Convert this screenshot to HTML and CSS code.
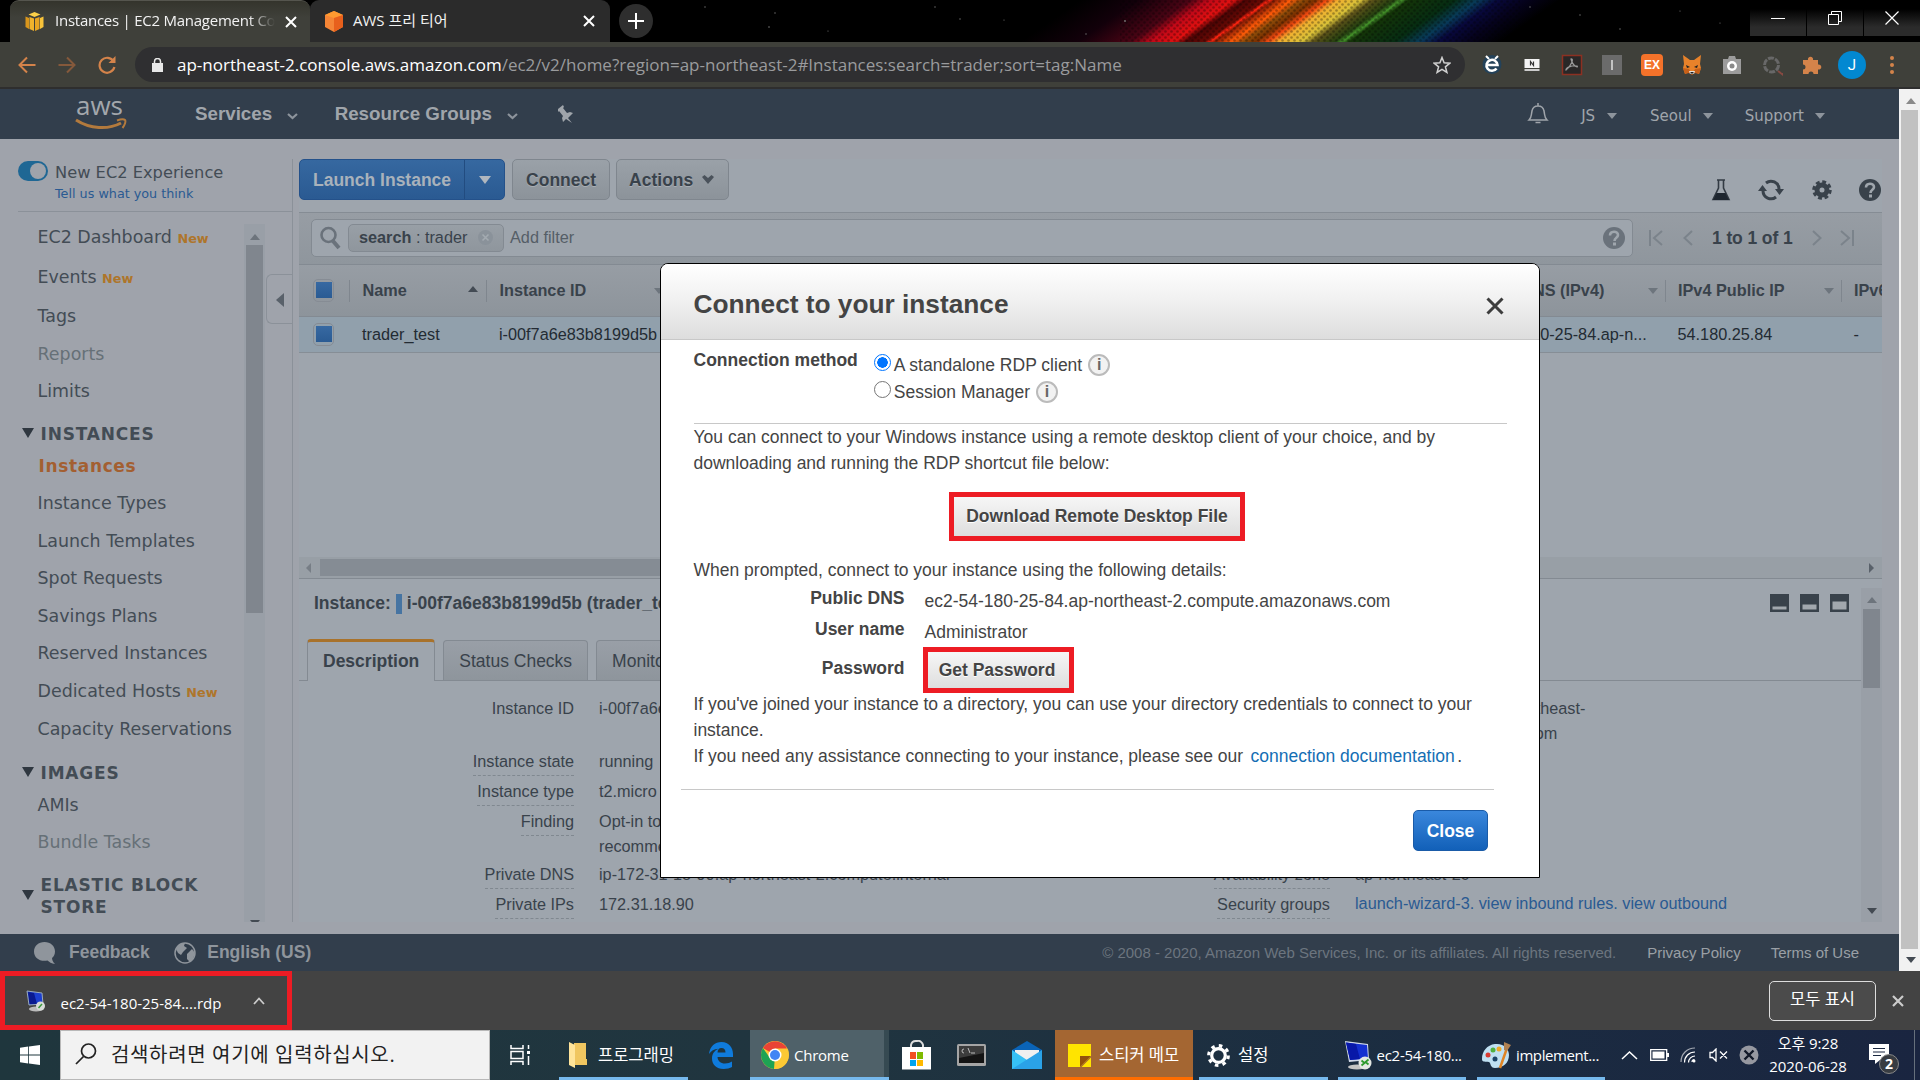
FILE: index.html
```html
<!DOCTYPE html>
<html lang="ko">
<head>
<meta charset="utf-8">
<title>Instances | EC2 Management Console</title>
<link rel="stylesheet" href="styles.css">
</head>
<body>
<div class="screen">

<!-- Browser tab strip -->
<div class="tabstrip">
  <svg class="wallpaper" width="1920" height="42" viewBox="0 0 1920 42">
    <defs>
      <linearGradient id="spectrum" x1="1080" x2="1560" y1="0" y2="0" gradientUnits="userSpaceOnUse">
        <stop offset="0" stop-color="#000"/><stop offset=".12" stop-color="#12000a"/><stop offset=".23" stop-color="#4a0414"/>
        <stop offset=".27" stop-color="#c00818"/><stop offset=".32" stop-color="#e01010"/><stop offset=".345" stop-color="#4a0404"/>
        <stop offset=".385" stop-color="#6a0a04"/><stop offset=".395" stop-color="#ff2410"/><stop offset=".405" stop-color="#8a1c04"/>
        <stop offset=".44" stop-color="#ff5a08"/><stop offset=".465" stop-color="#8a4a08"/><stop offset=".49" stop-color="#7a3000"/>
        <stop offset=".515" stop-color="#f04810"/><stop offset=".54" stop-color="#f0b030"/><stop offset=".585" stop-color="#d8c038"/>
        <stop offset=".61" stop-color="#5a5018"/><stop offset=".655" stop-color="#244010"/><stop offset=".67" stop-color="#44922a"/>
        <stop offset=".685" stop-color="#143408"/><stop offset=".78" stop-color="#062c12"/><stop offset=".83" stop-color="#083a58"/>
        <stop offset=".87" stop-color="#08083c"/><stop offset=".93" stop-color="#05021c"/><stop offset="1" stop-color="#000"/>
      </linearGradient>
      <pattern id="mesh" width="6" height="6" patternUnits="userSpaceOnUse"><circle cx="1.5" cy="1.5" r="1.3" fill="#000" opacity=".3"/><circle cx="4.5" cy="4.5" r="1.3" fill="#000" opacity=".3"/></pattern>
    </defs>
    <rect width="1920" height="42" fill="#000"/>
    <rect x="1080" width="480" height="42" fill="url(#spectrum)" transform="skewX(-55)"/>
    <rect x="1120" width="400" height="42" fill="url(#mesh)"/>
    <g fill="#777"><circle cx="705" cy="7" r=".7"/><circle cx="775" cy="13" r=".7"/><circle cx="769" cy="27" r=".8"/><circle cx="828" cy="31" r=".6"/><circle cx="935" cy="7" r=".7"/><circle cx="960" cy="19" r=".7"/><circle cx="1004" cy="20" r=".6"/><circle cx="1086" cy="34" r=".7"/><circle cx="1125" cy="21" r=".9"/><circle cx="1530" cy="7" r=".7"/><circle cx="1580" cy="15" r=".7"/><circle cx="1620" cy="29" r=".7"/><circle cx="1680" cy="11" r=".6"/><circle cx="1720" cy="23" r=".6"/><circle cx="1765" cy="5" r=".7"/></g>
  </svg>
  <div class="tabs">
    <div class="tab tab-active">
      <svg width="19" height="19" viewBox="0 0 19 19"><path d="M.5 4.500L4 6v11l-3.500-2z" fill="#d9961c"/><path d="M4.500 5L9 6.500V19l-4.500-2z" fill="#f0b22c"/><path d="M14.500 5L10 6.500V19l4.500-2z" fill="#e8a422"/><path d="M18.500 4.500L15 6v11l3.500-2z" fill="#f8c33a"/><path d="M9.500 0l6 2.500-6 2.500-6-2.500z" fill="#fbd048"/></svg>
      <span class="tab-title fade">Instances | EC2 Management Co</span>
      <svg class="tab-x" width="12" height="12" viewBox="0 0 12 12"><path d="M1 1l10 10M11 1L1 11" stroke="#fff" stroke-width="2"/></svg>
    </div>
    <div class="tab">
      <svg width="20" height="21" viewBox="0 0 20 21"><path d="M10 0l9 4v12l-9 5-9-5V4z" fill="#f58536"/><path d="M1 4l9 3 9-3-9-4z" fill="#ff9a30"/><path d="M10 7l9-3v12l-9 5z" fill="#e8601c"/></svg>
      <span class="tab-title">AWS 프리 티어</span>
      <svg class="tab-x" width="12" height="12" viewBox="0 0 12 12"><path d="M1 1l10 10M11 1L1 11" stroke="#fff" stroke-width="2"/></svg>
    </div>
    <div class="newtab"><svg width="16" height="16" viewBox="0 0 16 16"><path d="M8 0v16M0 8h16" stroke="#fff" stroke-width="2"/></svg></div>
  </div>
  <div class="winbtns">
    <div class="winbtn"><svg width="14" height="14" viewBox="0 0 14 14"><path d="M0 7.500h14" stroke="#fff"/></svg></div>
    <div class="winbtn"><svg width="14" height="14" viewBox="0 0 14 14" fill="none" stroke="#fff"><path d="M.5 3.500h10v10H.5zM3.500 3V.5h10v10H11"/></svg></div>
    <div class="winbtn"><svg width="14" height="14" viewBox="0 0 14 14"><path d="M.5 .5l13 13M13.500.5l-13 13" stroke="#fff" stroke-width="1.200"/></svg></div>
  </div>
</div>

<!-- Browser toolbar -->
<div class="toolbar">
  <div class="navbtns">
    <svg width="18" height="18" viewBox="0 0 18 18" fill="none" stroke="#d4834a" stroke-width="2"><path d="M17.500 9H2M9 1.500L1.500 9 9 16.500"/></svg>
    <svg width="18" height="18" viewBox="0 0 18 18" fill="none" stroke="#85593b" stroke-width="2"><path d="M.5 9H16M9 1.500L16.500 9 9 16.500"/></svg>
    <svg width="18" height="18" viewBox="0 0 18 18" fill="none" stroke="#d4834a" stroke-width="2.200"><path d="M15.600 5.500A7.500 7.500 0 1 0 16.400 11"/><path d="M17.500 0v7h-7z" fill="#d4834a" stroke="none"/></svg>
  </div>
  <div class="omnibox">
    <svg width="11" height="14" viewBox="0 0 11 14"><path d="M0 5h11v9H0z" fill="#e8e8e8"/><path d="M2.500 6V3.500a3 3 0 0 1 6 0V6" fill="none" stroke="#e8e8e8" stroke-width="1.500"/></svg>
    <span class="url"><b>ap-northeast-2.console.aws.amazon.com</b>/ec2/v2/home?region=ap-northeast-2#Instances:search=trader;sort=tag:Name</span>
    <svg class="star" width="18" height="18" viewBox="0 0 18 18"><path d="M9 1.500l2.100 5.300 5.700.4-4.400 3.600 1.500 5.600L9 13.300l-4.900 3.100 1.500-5.600L1.200 7.200l5.700-.4z" fill="none" stroke="#d0d0d0" stroke-width="1.500"/></svg>
  </div>
  <div class="exts">
    <svg width="22" height="22" viewBox="0 0 22 22"><circle cx="11" cy="10.500" r="9.500" fill="#24425a"/><path d="M5 2l3 3M17 2l-3 3" stroke="#fff" stroke-width="2"/><path d="M15.500 14.500A5.500 5.500 0 1 1 16.500 11H6.500" fill="none" stroke="#fff" stroke-width="2.600"/></svg>
    <svg width="22" height="22" viewBox="0 0 22 22"><path d="M3.500 5h15v9h-15z" fill="#f4f4f4"/><path d="M3.500 15h15v2h-15z" fill="#ccc"/><path d="M9.500 11.500v-4l3 4v-4" fill="none" stroke="#333" stroke-width="1.200"/></svg>
    <svg width="22" height="22" viewBox="0 0 22 22"><rect x="1.500" y="1.500" width="19" height="19" fill="#292727" stroke="#8c3022" stroke-width="1.500"/><path d="M10 5c3-1 1 6-5 11-1-2 6-5 11-4 2 2-4 1-6-7z" fill="none" stroke="#999" stroke-width="1.200"/></svg>
    <svg width="22" height="22" viewBox="0 0 22 22"><rect x="1" y="1" width="20" height="20" fill="#6b6b6b"/><path d="M11 6v10" stroke="#e0e0e0" stroke-width="1.500"/></svg>
    <div class="ext-ex">EX</div>
    <svg width="22" height="22" viewBox="0 0 22 22"><path d="M2 1l7 5h4l7-5-1 9 1 4-2 6-4-2-3 2-3-2-4 2-2-6 1-4z" fill="#e8822a"/><path d="M2 14l6 1 3 5 3-5 6-1-2 6-4-1-3 2-3-2-4 1z" fill="#c86018"/><path d="M8 17h6l-1 3H9z" fill="#e8e0d8"/><path d="M5 11l4 2-3 1zM17 11l-4 2 3 1zM9.500 18h3v1.500h-3z" fill="#222"/></svg>
    <svg width="22" height="22" viewBox="0 0 22 22"><path d="M2 5h5l1-3h6l1 3h5v15H2z" fill="#9c9c9c"/><circle cx="11" cy="12" r="5" fill="#fff"/><circle cx="11" cy="12" r="2.500" fill="#8a8a8a"/></svg>
    <svg width="22" height="22" viewBox="0 0 22 22"><circle cx="10.500" cy="11" r="7" fill="none" stroke="#686868" stroke-width="3" stroke-dasharray="6 1.300"/><path d="M17 17l4 3v-1" stroke="#864a42" stroke-width="2"/></svg>
    <svg width="22" height="22" viewBox="0 0 22 22"><path d="M2 6h5a2.600 2.600 0 1 1 5 0h5v4.500a2.600 2.600 0 1 1 0 5V20h-4.500a2.500 2.500 0 1 0-5 0H2v-4.500a2.500 2.500 0 1 0 0-5z" fill="#d4834a"/></svg>
    <div class="avatar">J</div>
    <svg width="22" height="22" viewBox="0 0 22 22" fill="#d4834a"><circle cx="11" cy="4" r="2"/><circle cx="11" cy="11" r="2"/><circle cx="11" cy="18" r="2"/></svg>
  </div>
</div>

<!-- Web page -->
<div class="viewport">
 <div class="page">
  <header class="aws-header">
    <div class="aws-logo"><span>aws</span><svg width="52" height="14" viewBox="0 0 52 14"><path d="M1 2c14 9 32 10 45 3" fill="none" stroke="#b37a3d" stroke-width="3"/><path d="M42 2.500c4-1.500 7-1.500 8-.5s0 5-2.500 8" fill="none" stroke="#b37a3d" stroke-width="2"/></svg></div>
    <span class="hmenu services">Services <svg width="11" height="7" viewBox="0 0 11 7"><path d="M1 1l4.500 4L10 1" fill="none" stroke="#8d949c" stroke-width="2.200"/></svg></span>
    <span class="hmenu">Resource Groups <svg width="11" height="7" viewBox="0 0 11 7"><path d="M1 1l4.500 4L10 1" fill="none" stroke="#8d949c" stroke-width="2.200"/></svg></span>
    <svg class="pin" width="17" height="18" viewBox="0 0 17 18"><path d="M1 4l5-4 1 2-1 1 4 5 3-1 3 1-5 5 4 5-6-4-3 3-1-4 1-2-4-5-1 1z" fill="#a0a5ab"/></svg>
    <div class="hright">
      <svg class="bell" width="22" height="22" viewBox="0 0 22 22" fill="none" stroke="#a0a5ab" stroke-width="1.500"><path d="M2 17c3-3 2-5 3-9 .5-3 2.500-5 6-5s5.500 2 6 5c1 4 0 6 3 9zM11 3V0M8.500 19.500h5"/></svg>
      <span class="user">JS <i class="caret"></i></span><span>Seoul <i class="caret"></i></span><span>Support <i class="caret"></i></span>
    </div>
  </header>

  <div class="content">
    <aside class="sidebar">
      <div class="experience">
        <div class="toggle"><i></i></div>
        <div><div class="exp-title">New EC2 Experience</div><div class="exp-link">Tell us what you think</div></div>
      </div>
      <div class="nav-area">
        <nav>
          <div class="item first">EC2 Dashboard <em>New</em></div>
          <div class="item loose">Events <em>New</em></div>
          <div class="item loose">Tags</div>
          <div class="item muted">Reports</div>
          <div class="item">Limits</div>
          <div class="group">INSTANCES</div>
          <div class="item current">Instances</div>
          <div class="item">Instance Types</div>
          <div class="item">Launch Templates</div>
          <div class="item">Spot Requests</div>
          <div class="item">Savings Plans</div>
          <div class="item">Reserved Instances</div>
          <div class="item">Dedicated Hosts <em>New</em></div>
          <div class="item after-new">Capacity Reservations</div>
          <div class="group">IMAGES</div>
          <div class="item tight">AMIs</div>
          <div class="item muted">Bundle Tasks</div>
          <div class="group">ELASTIC BLOCK<br>STORE</div>
        </nav>
        <div class="vscroll nav-scroll"><i class="up"></i><div class="thumb"></div><i class="down"></i></div>
        <div class="collapse"></div>
      </div>
    </aside>

    <main class="panel">
      <div class="actions">
        <div class="btn-primary split"><span>Launch Instance</span><b></b></div>
        <div class="btn">Connect</div>
        <div class="btn">Actions <svg width="12" height="9" viewBox="0 0 12 9"><path d="M0 2l2.500-2L6 3l3.500-3L12 2 6 9z" fill="#4a525b"/></svg></div>
        <div class="tools">
          <svg width="20" height="22" viewBox="0 0 20 22"><path d="M6 1h8M7.500 1v8L2 20.500h16L12.500 9V1" fill="none" stroke="#333b44" stroke-width="1.600"/><path d="M5.500 14h9l3.500 7H2z" fill="#1e262f"/></svg>
          <svg width="26" height="22" viewBox="0 0 26 22" fill="none" stroke="#39424b" stroke-width="3"><path d="M8 4a8 8 0 0 1 13 6M18 18a8 8 0 0 1-13-6"/><path d="M17 10h9l-4.500 6zM9 12H0l4.500-6z" fill="#39424b" stroke="none"/></svg>
          <svg width="20" height="20" viewBox="0 0 20 20"><circle cx="10" cy="10" r="5" fill="none" stroke="#39424b" stroke-width="5"/><circle cx="10" cy="10" r="8" fill="none" stroke="#39424b" stroke-width="3.500" stroke-dasharray="3.700 2.583"/></svg>
          <svg width="22" height="22" viewBox="0 0 22 22"><circle cx="11" cy="11" r="11" fill="#39424b"/><path d="M7 8.500c0-5 8-5 8-.5 0 3-3.500 2.500-3.500 6" fill="none" stroke="#9fa6ad" stroke-width="2.600"/><rect x="10" y="15.500" width="3" height="3" fill="#9fa6ad"/></svg>
        </div>
      </div>

      <div class="filter">
        <div class="filter-box">
          <svg width="22" height="24" viewBox="0 0 22 24"><circle cx="8.500" cy="9" r="7" fill="none" stroke="#6a727b" stroke-width="2.600"/><path d="M13 15l6 7" stroke="#6a727b" stroke-width="4"/></svg>
          <span class="token"><b>search</b> : trader <svg width="15" height="15" viewBox="0 0 15 15"><circle cx="7.500" cy="7.500" r="7.500" fill="#8a929a"/><path d="M4.500 4.500l6 6M10.500 4.500l-6 6" stroke="#a3aab0" stroke-width="1.600"/></svg></span>
          <span class="placeholder">Add filter</span>
          <svg class="help" width="22" height="22" viewBox="0 0 22 22"><circle cx="11" cy="11" r="11" fill="#6a727b"/><path d="M7 8.500c0-5 8-5 8-.5 0 3-3.500 2.500-3.500 6" fill="none" stroke="#9fa6ad" stroke-width="2.600"/><rect x="10" y="15.500" width="3" height="3" fill="#9fa6ad"/></svg>
        </div>
        <div class="pager">
          <svg width="14" height="16" viewBox="0 0 14 16" fill="none" stroke="#7b838b" stroke-width="2"><path d="M1 0v16M13 1L5 8l8 7"/></svg>
          <svg width="10" height="16" viewBox="0 0 10 16" fill="none" stroke="#7b838b" stroke-width="2"><path d="M9 1L1.500 8 9 15"/></svg>
          <b>1 to 1 of 1</b>
          <svg width="10" height="16" viewBox="0 0 10 16" fill="none" stroke="#7b838b" stroke-width="2"><path d="M1 1l7.500 7L1 15"/></svg>
          <svg width="14" height="16" viewBox="0 0 14 16" fill="none" stroke="#7b838b" stroke-width="2"><path d="M13 0v16M1 1l8 7-8 7"/></svg>
        </div>
      </div>

      <div class="table">
        <div class="tr th">
          <div class="td"><i class="check"></i></div>
          <div class="td">Name<i class="sort asc"></i></div>
          <div class="td">Instance ID<i class="sort"></i></div>
          <div class="td plain"></div>
          <div class="td plain dns">Public DNS (IPv4)<i class="sort"></i></div>
          <div class="td">IPv4 Public IP<i class="sort"></i></div>
          <div class="td">IPv6</div>
        </div>
        <div class="tr row">
          <div class="td"><i class="check"></i></div>
          <div class="td">trader_test</div>
          <div class="td">i-00f7a6e83b8199d5b</div>
          <div class="td"></div>
          <div class="td dns">ec2-54-180-25-84.ap-n...</div>
          <div class="td">54.180.25.84</div>
          <div class="td">-</div>
        </div>
      </div>
      <div class="hscroll"><i class="left"></i><div class="hthumb"></div><i class="right"></i></div>

      <div class="details">
        <div class="details-main">
          <div class="details-title"><b>Instance:</b><i></i><b>i-00f7a6e83b8199d5b (trader_test)</b>
            <span class="layouts">
              <svg width="19" height="18" viewBox="0 0 19 18"><path d="M0 0h19v18H0z" fill="#39424b"/><path d="M2.500 12.500h14v3h-14z" fill="#a2a8ae"/></svg>
              <svg width="19" height="18" viewBox="0 0 19 18"><path d="M0 0h19v18H0z" fill="#39424b"/><path d="M2.500 10.500h14v5h-14z" fill="#a2a8ae"/></svg>
              <svg width="19" height="18" viewBox="0 0 19 18"><path d="M0 0h19v18H0z" fill="#39424b"/><path d="M2.500 7.500h14v8h-14z" fill="#a2a8ae"/></svg>
            </span>
          </div>
          <div class="dtabs"><div class="dtab on">Description</div><div class="dtab">Status Checks</div><div class="dtab">Monitoring</div></div>
          <div class="cols">
            <dl class="left-col">
              <dt class="bare">Instance ID</dt><dd>i-00f7a6e83b8199d5b</dd>
              <dt>Instance state</dt><dd>running</dd>
              <dt>Instance type</dt><dd>t2.micro</dd>
              <dt>Finding</dt><dd>Opt-in to<br>recommendations</dd>
              <dt>Private DNS</dt><dd>ip-172-31-18-90.ap-northeast-2.compute.internal</dd>
              <dt>Private IPs</dt><dd>172.31.18.90</dd>
            </dl>
            <dl class="right-col">
              <dt class="bare"></dt><dd>ec2-54-180-25-84.ap-northeast-<br>2.compute.amazonaws.com</dd>
              <dt>Availability zone</dt><dd>ap-northeast-2c</dd>
              <dt>Security groups</dt><dd class="link">launch-wizard-3. view inbound rules. view outbound<br>rules</dd>
            </dl>
          </div>
        </div>
        <div class="vscroll detail-scroll"><i class="up"></i><div class="thumb"></div><i class="down"></i></div>
      </div>
    </main>
  </div>

  <footer class="aws-footer">
    <svg width="22" height="22" viewBox="0 0 22 22"><path d="M10.500 0C16.500 0 21 4 21 9.500c0 3-1.500 5.500-3 6.500.2 2 .8 4 3 6-3.500-.5-6-2-7.500-3.500C6 20 0 16 0 9.500 0 4 4.500 0 10.500 0z" fill="#8f959c"/></svg>
    <b class="feedback">Feedback</b>
    <svg width="22" height="22" viewBox="0 0 22 22"><circle cx="11" cy="11" r="10" fill="#2f3b49" stroke="#8f959c" stroke-width="1.500"/><path d="M2 7c2-4 6-6 9-6l-1 3 3 2-4 4-2 3-3-2zM13 12l5-5 3 4-2 6-3 3-3-3z" fill="#8f959c"/></svg>
    <b class="lang">English (US)</b>
    <span class="copy">© 2008 - 2020, Amazon Web Services, Inc. or its affiliates. All rights reserved.</span>
    <span class="policy">Privacy Policy</span><span class="terms">Terms of Use</span>
  </footer>

  <section class="dialog">
    <div class="dialog-head"><h1>Connect to your instance</h1><svg width="18" height="18" viewBox="0 0 18 18"><path d="M1.500 1.500l15 15M16.500 1.500l-15 15" stroke="#3c3c3c" stroke-width="3"/></svg></div>
    <div class="dialog-body">
      <div class="method">
        <b>Connection method</b>
        <div>
          <label><i class="radio on"></i>A standalone RDP client <i class="info">i</i></label>
          <label><i class="radio"></i>Session Manager <i class="info">i</i></label>
        </div>
      </div>
      <p>You can connect to your Windows instance using a remote desktop client of your choice, and by<br>downloading and running the RDP shortcut file below:</p>
      <div class="marked download">Download Remote Desktop File</div>
      <p class="prompt">When prompted, connect to your instance using the following details:</p>
      <div class="kv"><b>Public DNS</b><span>ec2-54-180-25-84.ap-northeast-2.compute.amazonaws.com</span></div>
      <div class="kv"><b>User name</b><span>Administrator</span></div>
      <div class="kv pw"><b>Password</b><div class="marked password">Get Password</div></div>
      <p class="notes">If you've joined your instance to a directory, you can use your directory credentials to connect to your<br>instance.<br>If you need any assistance connecting to your instance, please see our <a>connection documentation</a>.</p>
      <div class="dialog-foot"><div class="close-btn">Close</div></div>
    </div>
  </section>
 </div>
 <div class="page-scroll"><i class="up"></i><div class="thumb"></div><i class="down"></i></div>
</div>

<!-- Download shelf -->
<div class="shelf">
  <div class="dl-item">
    <svg width="20" height="22" viewBox="0 0 20 22"><ellipse cx="10" cy="19" rx="7" ry="2.500" fill="#bbb"/><path d="M1 1l15 2 1 11-14 1z" fill="#1c3fd0"/><path d="M2 2l6 1 3 11-8 0z" fill="#0a1a90"/><path d="M1 1l15 2 1 11-14 1z" fill="none" stroke="#9ab" /><circle cx="14.500" cy="16" r="4.500" fill="#d8dcd8"/><path d="M12.500 18l3.500-4" stroke="#3a9a3a" stroke-width="1.500"/></svg>
    <span>ec2-54-180-25-84....rdp</span>
    <svg width="12" height="8" viewBox="0 0 12 8"><path d="M1 7l5-5.500L11 7" fill="none" stroke="#ccc" stroke-width="1.800"/></svg>
  </div>
  <div class="showall">모두 표시</div>
  <svg class="shelf-x" width="12" height="12" viewBox="0 0 12 12"><path d="M1 1l10 10M11 1L1 11" stroke="#ccc" stroke-width="2.200"/></svg>
</div>

<!-- Windows taskbar -->
<div class="taskbar">
  <div class="start"><svg width="20" height="20" viewBox="0 0 20 20" fill="#fff"><path d="M0 2.800L8.200 1.600v8H0zM9 1.500L20 0v9.600H9zM0 10.400h8.200v8L0 17.200zM9 10.400h11V20L9 18.500z"/></svg></div>
  <div class="search"><svg width="22" height="22" viewBox="0 0 22 22" fill="none" stroke="#222" stroke-width="1.700"><circle cx="13.500" cy="8" r="7"/><path d="M8.500 13.500L1 21"/></svg><span>검색하려면 여기에 입력하십시오.</span></div>
  <div class="tb taskview"><svg width="21" height="20" viewBox="0 0 21 20" fill="none" stroke="#fff" stroke-width="1.500"><path d="M1 0v3.500h12V0M1 20v-3.500h12V20M1 6.500h12v7H1zM18.500 0v4M18.500 11v9"/><path d="M18.500 6v3" stroke-width="3"/></svg></div>
  <div class="tb open folder"><svg width="19" height="26" viewBox="0 0 19 26"><path d="M5 1h12v16h1v6H5z" fill="#f0c660"/><path d="M0 0l6 3v23l-6-3z" fill="#ffe49a"/></svg><span class="ko">프로그래밍</span></div>
  <div class="tb edge"><svg width="26" height="27" viewBox="0 0 26 27"><path d="M1 12C2 4 7 0 13.500 0 21 0 25 6 25 12v3H9.500c.3 4 3 6.500 7.500 6.500 3 0 5-.8 7-2V25c-2 1.200-5 2-8.500 2C8.500 27 4 22.500 4 16.500 4 12 6.500 8.500 10.500 6.800 6 7 3 9 1 12zm8.500-1.500h8c0-3-1.300-4.500-4-4.500s-3.800 2-4 4.500z" fill="#0f7bdc"/></svg></div>
  <div class="tb open chrome"><svg width="28" height="28" viewBox="0 0 28 28"><circle cx="14" cy="14" r="14" fill="#fcc934"/><path d="M14 14L1.900 7A14 14 0 0 1 26.100 7.500H14z" fill="#ea4335"/><path d="M1.900 7A14 14 0 0 0 13 28l6-11-10 0z" fill="#1ea354"/><path d="M14 14l12-6.500A14 14 0 0 1 13 28z" fill="#fcc934"/><circle cx="14" cy="14" r="6.500" fill="#fff"/><circle cx="14" cy="14" r="5" fill="#4285f4"/></svg><span>Chrome</span></div>
  <div class="tb store"><svg width="30" height="30" viewBox="0 0 30 30"><path d="M9 9V5a5 5 0 0 1 5-4h1a5 5 0 0 1 6 4v4" fill="none" stroke="#ddd" stroke-width="2"/><path d="M0 7h29v22.500H0z" fill="#fff"/><path d="M8 12h6v7H8z" fill="#f25022"/><path d="M15 12h6v7h-6z" fill="#7fba00"/><path d="M8 20h6v6H8z" fill="#00a4ef"/><path d="M15 20h6v6h-6z" fill="#ffb900"/></svg></div>
  <div class="tb cmd"><svg width="29" height="22" viewBox="0 0 29 22"><rect width="29" height="22" rx="1.500" fill="#a5a5a5"/><path d="M2 2h25v17H2z" fill="#141414"/><path d="M2 2h25v7L2 14z" fill="#3c3c3c"/><path d="M7 5a2 2 0 1 0 0 4M9 6v.1M9 8v.1M11 4l2 5M14 9h4" stroke="#bbb" fill="none"/></svg></div>
  <div class="tb mail"><svg width="30" height="28" viewBox="0 0 30 28"><path d="M0 9l15-9 15 9v5H0z" fill="#0a64b8"/><path d="M3 9h24v8L15 22 3 17z" fill="#f0f0f0"/><path d="M0 9l15 10 15 9H0z" fill="#36c0f5"/><path d="M30 9L0 28h30z" fill="#2aa2e8"/></svg></div>
  <div class="tb sticky"><svg width="23" height="23" viewBox="0 0 23 23"><path d="M0 0h23v12l-11 11H0z" fill="#ffe400"/><path d="M12 23V12h11z" fill="#94520c"/><path d="M13.500 23L23 13.500V23z" fill="#ffe400"/></svg><span class="ko">스티커 메모</span></div>
  <div class="tb open settings"><svg width="23" height="23" viewBox="0 0 23 23" fill="none" stroke="#fff"><circle cx="11.500" cy="11.500" r="6.800" stroke-width="3.200"/><circle cx="11.500" cy="11.500" r="9.800" stroke-width="3.200" stroke-dasharray="3.500 4.200"/></svg><span class="ko">설정</span></div>
  <div class="tb open rdp"><svg width="29" height="29" viewBox="0 0 29 29"><ellipse cx="14" cy="26" rx="9" ry="2.500" fill="#c4c4c4"/><path d="M2 0l23 3 1 16-20 2z" fill="#d0d8e8"/><path d="M3 1.500l21 2.500 1 13.500-18 1.500z" fill="#1430d0"/><path d="M3 1.500l10 1.500 4 15-10 1z" fill="#0818a8"/><circle cx="22" cy="22" r="6.500" fill="#e4e8e4"/><path d="M18.500 19.500l3 2.500-3 2.500M25.500 18.500l-3 2.500 3 2.500" fill="none" stroke="#2c9a2c" stroke-width="1.800"/></svg><span>ec2-54-180...</span></div>
  <div class="tb open paint"><svg width="29" height="28" viewBox="0 0 29 28"><path d="M13 3C22 2 27 8 27 14c0 8-6 13-14 13-5 0-4-5-6-6-3-1-7 1-7-3C0 10 5 4 13 3z" fill="#bfe0f2"/><circle cx="6" cy="14" r="2.500" fill="#d83a30"/><circle cx="11" cy="9" r="2.500" fill="#50b040"/><circle cx="17" cy="8" r="2.500" fill="#f0a828"/><circle cx="13" cy="18" r="2.500" fill="#1c4468"/><path d="M25 7l-7 20" stroke="#e08424" stroke-width="2.500"/><path d="M22 1l7 3-4 6-3-1z" fill="#b08050"/></svg><span>implement...</span></div>
  <div class="tray">
    <svg width="17" height="9" viewBox="0 0 17 9"><path d="M1 8l7.500-7L16 8" fill="none" stroke="#fff" stroke-width="1.500"/></svg>
    <svg width="19" height="12" viewBox="0 0 19 12"><path d="M.7.7h16v10.600H.7z" fill="none" stroke="#fff" stroke-width="1.300"/><path d="M2.500 2.500h12v7h-12z" fill="#fff"/><path d="M18 4v4" stroke="#fff" stroke-width="2"/></svg>
    <svg width="17" height="16" viewBox="0 0 17 16" fill="none" stroke="#fff" stroke-width="1.200"><path d="M1 15C1 7 7 1 15 1" opacity=".6"/><path d="M4.500 15.500C4.500 9.500 9 5 15 5M8.500 15.500c0-3.500 3-6.500 6.500-6.500M12 15c0-1.500 1-2.500 2.500-2.500"/><circle cx="14" cy="14" r="1.500" fill="#fff" stroke="none"/></svg>
    <svg width="19" height="14" viewBox="0 0 19 14" fill="none" stroke="#fff" stroke-width="1.300"><path d="M1 4.500h2.500L7 1v12L3.500 9.500H1zM11 3.500l7 7M18 3.500l-7 7"/></svg>
    <svg width="20" height="20" viewBox="0 0 20 20"><circle cx="10" cy="10" r="9.500" fill="#9698a0"/><path d="M5.500 5.500l9 9M14.500 5.500l-9 9" stroke="#111827" stroke-width="2.400"/></svg>
  </div>
  <div class="clock"><span>오후 9:28</span><span>2020-06-28</span></div>
  <div class="notif"><svg width="21" height="20" viewBox="0 0 21 20"><path d="M0 0h20v16H11l-5 4v-4H0z" fill="#fff"/><path d="M4 4.500h12M4 8h12M4 11.500h8" stroke="#1a2740" stroke-width="1.200"/></svg><b>2</b></div>
</div>

</div>
</body>
</html>
```
FILE: styles.css
```css
* { box-sizing: border-box; }
body { margin: 0; background: #000; font-family: "Liberation Sans", "Noto Sans CJK KR", sans-serif; }
svg { display: block; flex: none; }
i, em { font-style: normal; }
.screen { width: 1920px; height: 1080px; overflow: hidden; display: flex; flex-direction: column; position: relative; }
.screen > div { flex: none; }
.tabstrip, .toolbar, .shelf, .taskbar { font-family: "Open Sans", "Noto Sans CJK KR", sans-serif; white-space: nowrap; }

/* tab strip */
.tabstrip { height: 42px; position: relative; display: flex; justify-content: space-between; }
.wallpaper { position: absolute; left: 0; top: 0; }
.tabs { display: flex; position: relative; padding-left: 10px; }
.tab { width: 300px; height: 42px; display: flex; align-items: center; padding: 0 15px 0 14px; background: #2b2b2b; border-radius: 9px 9px 0 0; color: #f2f2f2; font-size: 15px; }
.tab-active { background: linear-gradient(#34342c, #3f403a 40%); border-top: 1px solid #55554e; padding: 0 14px 0 15px; }
.tab-title { margin-left: 9px; flex: 1; padding-bottom: 4px; }
.tab-active .tab-title { margin-left: 11px; margin-right: 10px; letter-spacing: -.25px; }
.fade { -webkit-mask-image: linear-gradient(90deg, #000 88%, transparent); mask-image: linear-gradient(90deg, #000 88%, transparent); }
.newtab { width: 34px; height: 34px; margin: 4px 0 0 9px; border-radius: 50%; background: #2e2e2e; display: grid; place-items: center; }
.winbtns { display: flex; gap: 1px; position: relative; height: 36px; }
.winbtn { width: 56px; background: linear-gradient(#000 25%, #2b2b2b 75%); display: grid; place-items: center; }

/* toolbar */
.toolbar { height: 47px; background: #3f403a; border-bottom: 2px solid #2e2e2e; display: flex; align-items: center; }
.navbtns { display: flex; gap: 22px; padding-left: 18px; width: 135px; }
.omnibox { width: 1330px; height: 35px; border-radius: 18px; background: #2f2f31; display: flex; align-items: center; padding: 0 14px 0 17px; }
.url { margin-left: 14px; color: #9a9b9d; font-size: 17px; flex: 1; }
.url b { font-weight: 400; color: #fff; }
.exts { display: flex; gap: 18px; margin-left: 16px; align-items: center; }
.ext-ex { width: 22px; height: 22px; border-radius: 4px; background: #f4722a; color: #fff; font: bold 12px/22px "Liberation Sans", sans-serif; text-align: center; }
.avatar { width: 28px; height: 28px; margin: 0 -3px; border-radius: 50%; background: #0288d1; color: #fff; font: 15px/28px Roboto, sans-serif; text-align: center; }

/* page */
.viewport { height: 882px; display: flex; }
.page { width: 1899px; display: flex; flex-direction: column; background: #9fa3ab; position: relative; }
.page-scroll { width: 21px; background: #f1f1f1; padding: 9px 0 8px 2px; display: flex; flex-direction: column; align-items: center; }
.page-scroll .thumb { width: 17px; flex: 1; margin: 6px 2px 8px 0; background: #c1c1c1; }
.up, .down { display: block; border: 5px solid transparent; width: 0; height: 0; flex: none; }
.up { border-top: 0; border-bottom: 6px solid #6d747c; }
.down { border-bottom: 0; border-top: 6px solid #434a52; }
.page-scroll .up { border-bottom-color: #8a8a8a; }

.aws-header { height: 50px; background: #323e4c; display: flex; align-items: center; color: #a0a5ab; }
.aws-logo { width: 52px; margin-left: 75px; height: 42px; text-align: center; }
.aws-logo span { display: block; font: 500 26px/30px "Open Sans", sans-serif; height: 24px; margin-top: -3px; margin-left: -3px; color: #a3a7ac; }
.aws-logo svg { margin-top: 4px; }
.hmenu { display: flex; align-items: center; gap: 15px; font-weight: 700; font-size: 18.75px; margin-right: 36.500px; padding-bottom: 1px; white-space: nowrap; }
.hmenu svg { margin-top: 5px; }
.services { margin-left: 68px; }
.pin { margin-left: 2px; }
.hright { margin-left: auto; display: flex; align-items: center; font-family: "DejaVu Sans", sans-serif; font-size: 15px; padding-right: 74px; }
.hright span { display: flex; align-items: center; gap: 11px; margin-left: 32px; padding-top: 3px; }
.hright .user { gap: 12px; margin-right: 1px; }
.caret { border: 5px solid transparent; border-top: 6px solid #8d949c; border-bottom: 0; }

.content { height: 795px; display: flex; padding-top: 20px; }
.sidebar { width: 293px; height: 763px; font-family: "DejaVu Sans", "Noto Sans", sans-serif; color: #434c55; display: flex; flex-direction: column; border-right: 1px solid #8b9199; }
.experience { margin-left: 18px; height: 53px; border-bottom: 1px solid #8b9199; display: flex; gap: 7px; flex: none; }
.toggle { width: 30px; height: 20px; margin-top: 2px; border-radius: 10px; background: #1f6794; display: flex; justify-content: flex-end; padding: 2px; }
.toggle i { width: 16px; height: 16px; border-radius: 50%; background: #9fa3ab; }
.exp-title { font-size: 16.250px; line-height: 22px; padding-top: 3px; }
.exp-link { font-size: 12.750px; line-height: 20px; color: #2a5a92; }
.nav-area { flex: 1; min-height: 0; display: flex; position: relative; padding-top: 12px; }
nav { width: 244px; height: 698px; overflow: hidden; padding-left: 37.500px; white-space: nowrap; }
.item { font-size: 17.450px; line-height: 22px; height: 22px; margin-top: 15.500px; }
.item em { font-size: 12.800px; font-weight: 700; color: #ae752a; }
.first { margin-top: 2px; }
.loose { margin-top: 18px; }
.loose + .loose { margin-top: 17px; }
.muted { color: #667077; }
.current { margin-top: 10px; color: #a35f31; font-weight: 700; font-size: 17px; letter-spacing: .65px; padding-left: 1px; }
.tight { margin-top: 10px; }
.after-new { margin-top: 16.500px; }
.group { font-weight: 700; font-size: 17px; letter-spacing: .8px; line-height: 22px; margin: 20.500px 0 0 -17px; padding-left: 20px; position: relative; }
.after-new + .group { margin-top: 21.500px; }
.group::before { content: ""; position: absolute; left: 1px; top: calc(50% - 6px); border: 6px solid transparent; border-top: 10px solid #2f3740; border-bottom: 0; }
.vscroll { width: 21px; background: #999fa7; display: flex; flex-direction: column; align-items: center; }
.vscroll .thumb { width: 17px; background: #80868e; }
.nav-scroll { height: 698px; padding-top: 10px; overflow: hidden; }
.nav-scroll .thumb { height: 368px; margin-top: 5px; flex: none; }
.nav-scroll .down { margin-top: 307px; }
.collapse { position: absolute; right: -1px; top: 62px; width: 27px; height: 50px; border: 1px solid #8b9199; border-right: 0; border-radius: 6px 0 0 6px; }
.collapse::before { content: ""; position: absolute; left: 9px; top: 18px; border: 7px solid transparent; border-right: 8px solid #59616a; border-left: 0; }

/* main panel */
.panel { margin-left: 6px; width: 1583px; height: 763px; background: #9ea5ad; color: #39424b; white-space: nowrap; overflow: hidden; }
.actions { height: 53px; display: flex; gap: 7px; align-items: flex-start; padding-right: 1px; }
.btn, .btn-primary { height: 41px; border: 1px solid #7f868e; border-radius: 5px; font: bold 17.500px/41px "Liberation Sans", sans-serif; }
.btn { background: linear-gradient(#9aa1a8, #8c939a); padding: 1px 13px 0; display: flex; align-items: center; gap: 7px; text-shadow: 0 1px #a9afb5; }
.btn + .btn { padding: 1px 14px 0 12px; margin-left: -1px; gap: 9px; }
.btn svg { margin-top: -2px; }
.btn-primary { background: linear-gradient(#3668a0, #2a5a92); border-color: #24518a; color: #a9b2bb; display: flex; padding-left: 13px; }
.split b { width: 40px; margin-left: 13px; border-left: 1px solid #224c80; display: grid; place-items: center; }
.split b::before { content: ""; border: 6.500px solid transparent; border-top: 8px solid #b0b7bf; border-bottom: 0; }
.tools { margin: 20px 0 0 auto; display: flex; align-items: center; gap: 27.500px; }
.filter { height: 52px; border-top: 1px solid #858c94; background: linear-gradient(#979da4, #8f969d); display: flex; align-items: center; padding-left: 12px; }
.filter-box { width: 1322px; height: 38px; border: 1px solid #838a92; border-radius: 5px; background: #9ea5ad; display: flex; align-items: center; font-size: 16.250px; padding: 0 7px 1px 8px; margin-top: -1px; flex: none; }
.token { margin: 0 6px; width: 156px; height: 28px; border: 1px solid #838a92; border-radius: 5px; background: linear-gradient(#989fa6, #8f969d); display: flex; align-items: center; gap: 4.500px; padding: 0 10px 0 10px; }
.token svg { margin-left: auto; }
.placeholder { color: #555e67; flex: 1; }
.pager { display: flex; align-items: center; gap: 19.500px; margin: -1px 0 0 16px; font-size: 17.500px; letter-spacing: -.1px; }
.pager svg:last-child { margin-left: -2px; }
.table { height: 293px; }
.tr { display: grid; grid-template-columns: 50px 137px 174px 794px 210.500px 176px 41.500px; align-items: center; font-size: 16.250px; }
.td { padding-left: 13px; display: flex; align-items: center; overflow: hidden; height: 22px; }
.td:first-child { padding-left: 14px; height: 26px; padding-bottom: 1px; }
.th { height: 53px; border-top: 1px solid #838a92; border-bottom: 1px solid #838a92; background: linear-gradient(#979da4, #8d949b); font-weight: 700; }
.th .td + .td { border-left: 1px solid #7f868e; padding-left: 12.500px; }
.th .plain.td { border: 0; padding-left: 14px; }
.row { height: 36px; background: #91a0ac; border-bottom: 1px solid #868e96; color: #232b33; }
.sort { border: 5px solid transparent; border-top: 6px solid #6d757d; border-bottom: 0; margin: 0 7px 0 auto; }
.td:nth-child(3) .sort { margin-right: -4px; }
.sort.asc { border-top: 0; border-bottom: 6px solid #434b54; margin-bottom: 3px; margin-right: 8px; }
.check { width: 21px; height: 23px; border: 1px solid #868c94; border-radius: 5px; background: linear-gradient(#3769a2, #2a5b93) center / 16px 16px no-repeat; }
.hscroll { height: 21px; background: #989fa6; display: flex; align-items: center; padding-left: 7px; }
.left, .right { border: 5px solid transparent; }
.left { border-left: 0; border-right: 5px solid #777e86; }
.right { border-right: 0; border-left: 5px solid #59616a; margin-left: auto; margin-right: 8px; }
.hthumb { width: 1000px; height: 17px; margin-left: 9px; background: #858c94; }
.details { border-top: 1px solid #838a92; height: 344px; display: flex; justify-content: space-between; }
.details-main { width: 1562px; }
.details-title { height: 61px; display: flex; align-items: center; padding: 0 12px 12px 15px; font-size: 17.500px; }
.details-title i { width: 6px; height: 20px; margin: 0 5px; background: #4674a2; }
.layouts { margin: -1px 0 0 auto; display: flex; gap: 11px; }
.dtabs { height: 41px; display: flex; gap: 8px; align-items: flex-end; padding-left: 8px; border-bottom: 1px solid #838a92; }
.dtab { height: 40px; border: 1px solid #838a92; border-bottom: 0; border-radius: 4px 4px 0 0; padding: 0 15px; font-size: 17.500px; line-height: 40px; background: linear-gradient(#999fa7, #8e959c); }
.dtab.on { height: 42px; margin-bottom: -1px; background: #9ea5ad; border-top: 3px solid #a8722b; font-weight: 700; line-height: 38px; }
.cols { display: flex; height: 242px; overflow: hidden; font-size: 16.250px; line-height: 25px; padding-top: 16px; }
dl { margin: 0; display: grid; grid-template-columns: 275px auto; column-gap: 25px; align-content: start; justify-content: start; }
.left-col { grid-template-rows: 52px 30px 30px 53px 30px 30px; width: 731px; }
.right-col { grid-template-rows: 165px 30px 30px; grid-template-columns: 300px auto; }
dt { justify-self: end; height: 27px; border-bottom: 1px dashed #808890; line-height: 25px; }
dt.bare { border: 0; line-height: 23px; }
dd { margin: 0; }
dt.bare + dd { margin-top: -1px; }
.link { color: #2a5a92; }
dd.link { margin-top: -1px; }
.detail-scroll { height: 334px; margin-top: 9px; padding: 9px 0 8px; }
.detail-scroll .thumb { height: 79px; margin-top: 6px; }
.detail-scroll .down { margin-top: auto; }

.aws-footer { height: 37px; background: #323e4c; display: flex; align-items: center; padding: 0 40px 0 34px; font-size: 15px; color: #9aa0a6; white-space: nowrap; }
.aws-footer b { font-size: 17.500px; color: #8f959c; margin-left: 13px; margin-top: -1px; }
.aws-footer .feedback { margin-right: 24px; }
.aws-footer .lang { margin-left: 11.500px; }
.copy { margin-left: auto; color: #6c757f; }
.policy { margin-left: 31px; }
.terms { margin-left: 30px; }

/* dialog */
.dialog { position: absolute; left: 660px; top: 174px; width: 880px; height: 615px; background: #fff; border: 1px solid #000; border-radius: 8px 8px 0 0; color: #444; font-size: 17.500px; overflow: hidden; white-space: nowrap; }
.dialog-head { height: 76px; border-bottom: 1px solid #c8c8c8; background: linear-gradient(#fff, #f0f0f0 50%, #ddd); display: flex; align-items: center; justify-content: space-between; padding: 8px 35px 0 32.500px; }
.dialog h1 { margin: 0 0 4px; font-size: 26.250px; line-height: 30px; }
.dialog-body { padding: 0 32px 0 32.500px; }
.method { height: 84px; border-bottom: 1px solid #c8c8c8; padding-top: 11px; display: flex; gap: 16px; }
.method b { line-height: 17px; }
.method > b { padding-top: 1px; }
.method label { display: flex; align-items: center; height: 27px; padding-top: 1px; }
.radio { width: 17px; height: 17px; border: 1px solid #767676; border-radius: 50%; margin: -5px 3px 0 0; }
.radio.on { border: 1.500px solid #0075ff; background: radial-gradient(#0075ff 5px, #fff 5.500px); }
.info { width: 22px; height: 22px; margin-left: 6px; margin-top: -1px; border: 2px solid #bbb; border-radius: 50%; background: #f2f2f2; font: bold 16px/18px "Liberation Sans", sans-serif; text-align: center; color: #666; }
.dialog p { margin: 0; line-height: 26.250px; }
.marked { border: 5px solid #ed1c24; background: linear-gradient(#f6f6f6, #dedede); font-weight: 700; text-align: center; text-shadow: 0 1px #fff; }
.download { width: 296px; height: 49px; line-height: 39px; margin: 15px 0 0 255.500px; }
.dialog .prompt { margin-top: 16.500px; margin-bottom: 2.500px; }
.kv { display: grid; grid-template-columns: 211px auto; column-gap: 20px; align-items: center; height: 31px; }
.kv b { text-align: right; padding-bottom: 5px; }
.kv.pw { height: 46px; column-gap: 18.500px; }
.kv.pw b { padding-bottom: 4px; }
.password { width: 151px; height: 46px; line-height: 36px; padding-right: 3px; margin-top: -1px; }
.dialog .notes { margin-top: -3px; line-height: 26px; }
.dialog a { color: #146eb4; margin: 0 2.500px 0 2.500px; }
.dialog-foot { margin: 20px 13px 0 -12.500px; border-top: 1px solid #c8c8c8; padding: 20px 6px 0 0; display: flex; justify-content: flex-end; }
.close-btn { width: 75px; height: 41px; border: 1px solid #1a5ba8; border-radius: 5px; background: linear-gradient(#3a87dc, #1260b8); color: #fff; font-weight: 700; line-height: 41px; text-align: center; }

/* download shelf */
.shelf { height: 59px; background: #434343; display: flex; align-items: center; color: #fff; font-size: 15px; padding-right: 16px; }
.dl-item { width: 292px; height: 59px; margin-top: -1px; border: 5px solid #ed1c24; display: flex; align-items: center; padding: 2px 22px 0 21px; justify-content: space-between; }
.dl-item span { margin: 3px 19px 0 0; width: 162px; }
.dl-item svg:last-child { margin-left: -3px; }
.showall { margin-left: auto; width: 107px; height: 40px; border: 1px solid #ddd; border-radius: 5px; background: #4b4b4b; font-size: 16.500px; line-height: 34px; text-align: center; }
.shelf-x { margin-left: 16px; }

/* taskbar */
.taskbar { height: 50px; background: linear-gradient(90deg, #1f363d 0, #20353f 40%, #1b2c41 75%, #1a2540); display: flex; color: #fff; font-size: 15px; }
.start { width: 60px; display: grid; place-items: center; }
.search { width: 430px; background: #f2f2f2; border: 1px solid #b8b8b8; display: flex; align-items: center; padding: 0 0 3px 14px; color: #222; font-size: 20px; letter-spacing: .65px; gap: 14px; }
.tb { display: flex; align-items: center; gap: 9px; flex: none; letter-spacing: -.25px; }
.ko { font-size: 16.500px; letter-spacing: 0; margin-top: -2px; }
.open { border-bottom: 3px solid #76b9ed; padding-top: 3px; }
.taskview { width: 69px; padding-left: 20px; }
.folder { width: 129px; padding-left: 10px; gap: 10px; }
.edge { width: 62px; padding-left: 20px; }
.chrome { width: 139px; padding-left: 11px; background: linear-gradient(90deg, #4f6169 134px, #364a52 134px); gap: 5px; }
.store { width: 55px; padding-left: 13px; }
.cmd { width: 55px; padding-left: 13px; }
.mail { width: 56px; padding-left: 13px; }
.sticky { width: 138px; background: #a46632; border-bottom: 3px solid #ff6d00; padding: 3px 0 0 13px; gap: 8px; }
.settings { width: 129px; margin-left: 6px; padding-left: 8px; gap: 8px; }
.rdp { width: 128px; margin-left: 10px; padding-left: 5px; gap: 4.500px; }
.paint { width: 128px; margin-left: 11px; padding-left: 5px; gap: 5px; letter-spacing: -.4px; }
.tray { display: flex; align-items: center; gap: 11.500px; margin-left: 16px; width: 138px; }
.clock { width: 98px; display: flex; flex-direction: column; align-items: center; justify-content: center; line-height: 23px; letter-spacing: -.1px; }
.notif { width: 46px; margin-left: auto; margin-right: 5px; padding: 14px 0 0 0; position: relative; border-right: 1px solid #66707c; flex: none; }
.notif b { position: absolute; left: 10px; top: 24px; width: 20px; height: 20px; border-radius: 50%; background: #383c42; border: 1px solid #888; font: bold 14px/18px "Open Sans", sans-serif; text-align: center; }
```
